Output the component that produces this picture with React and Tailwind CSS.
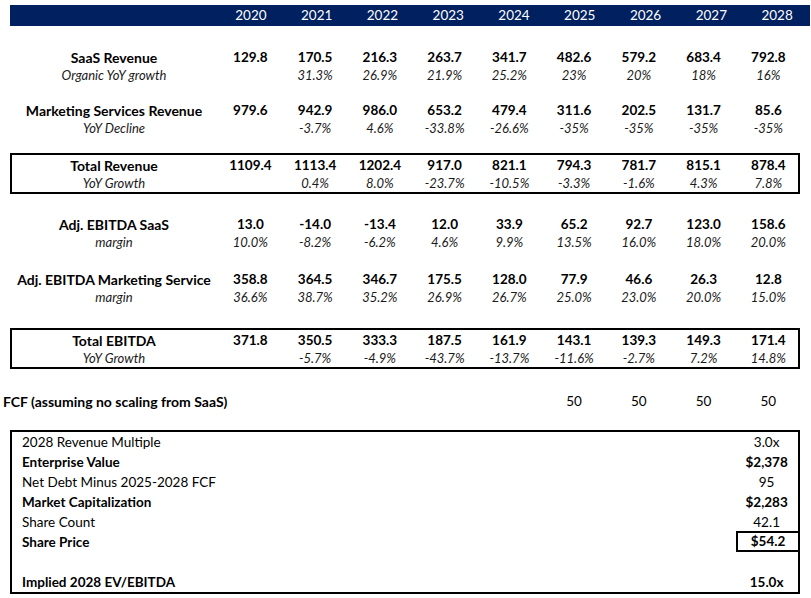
import React from 'react';

const years = ['2020', '2021', '2022', '2023', '2024', '2025', '2026', '2027', '2028'];

const sections = [
  {
    boxed: false,
    gap: 'mt-[21px]',
    main: ['SaaS Revenue', ['129.8', '170.5', '216.3', '263.7', '341.7', '482.6', '579.2', '683.4', '792.8']],
    sub: ['Organic YoY growth', ['', '31.3%', '26.9%', '21.9%', '25.2%', '23%', '20%', '18%', '16%']],
  },
  {
    boxed: false,
    gap: 'mt-[15px]',
    main: ['Marketing Services Revenue', ['979.6', '942.9', '986.0', '653.2', '479.4', '311.6', '202.5', '131.7', '85.6']],
    sub: ['YoY Decline', ['', '-3.7%', '4.6%', '-33.8%', '-26.6%', '-35%', '-35%', '-35%', '-35%']],
  },
  {
    boxed: true,
    gap: 'mt-[15px]',
    main: ['Total Revenue', ['1109.4', '1113.4', '1202.4', '917.0', '821.1', '794.3', '781.7', '815.1', '878.4']],
    sub: ['YoY Growth', ['', '0.4%', '8.0%', '-23.7%', '-10.5%', '-3.3%', '-1.6%', '4.3%', '7.8%']],
  },
  {
    boxed: false,
    gap: 'mt-[20px]',
    main: ['Adj. EBITDA SaaS', ['13.0', '-14.0', '-13.4', '12.0', '33.9', '65.2', '92.7', '123.0', '158.6']],
    sub: ['margin', ['10.0%', '-8.2%', '-6.2%', '4.6%', '9.9%', '13.5%', '16.0%', '18.0%', '20.0%']],
  },
  {
    boxed: false,
    gap: 'mt-[17px]',
    main: ['Adj. EBITDA Marketing Service', ['358.8', '364.5', '346.7', '175.5', '128.0', '77.9', '46.6', '26.3', '12.8']],
    sub: ['margin', ['36.6%', '38.7%', '35.2%', '26.9%', '26.7%', '25.0%', '23.0%', '20.0%', '15.0%']],
  },
  {
    boxed: true,
    gap: 'mt-[21px]',
    main: ['Total EBITDA', ['371.8', '350.5', '333.3', '187.5', '161.9', '143.1', '139.3', '149.3', '171.4']],
    sub: ['YoY Growth', ['', '-5.7%', '-4.9%', '-43.7%', '-13.7%', '-11.6%', '-2.7%', '7.2%', '14.8%']],
  },
];

const valuation = [
  ['2028 Revenue Multiple', '3.0x', false],
  ['Enterprise Value', '$2,378', true],
  ['Net Debt Minus 2025-2028 FCF', '95', false],
  ['Market Capitalization', '$2,283', true],
  ['Share Count', '42.1', false],
  ['Share Price', '$54.2', true],
  ['', '', false],
  ['Implied 2028 EV/EBITDA', '15.0x', true],
];

const Row = ({ label, values, italic }) => (
  <div
    className={`grid grid-cols-[208px_repeat(9,64.75px)] items-center ${
      italic ? 'h-[19px] text-[13px] italic text-[#1a1a1a]' : 'h-[19px] text-[13.5px] font-bold'
    }`}
  >
    <div className={`text-center whitespace-nowrap ${italic ? '' : 'text-[14px]'}`}>{label}</div>
    {values.map((v, i) => (
      <div key={i} className="text-center">
        {v}
      </div>
    ))}
  </div>
);

const App = () => {
  return (
    <div className="w-[811px] h-[598px] bg-white text-black font-['Lato','Noto_Sans',sans-serif] overflow-hidden">
      {/* Year header */}
      <div className="ml-[10px] mt-[5px] w-[800px] h-[21px] bg-[#002060] text-white text-[13.5px] grid grid-cols-[208px_repeat(9,1fr)] items-center">
        <div></div>
        {years.map((y) => (
          <div key={y} className="text-center">
            {y}
          </div>
        ))}
      </div>

      <div className="ml-[10px] w-[790px]">
        {sections.map((s, idx) =>
          s.boxed ? (
            <div key={idx} className={`${s.gap} ring-2 ring-inset ring-black pt-[2px] pb-px`}>
              <Row label={s.main[0]} values={s.main[1]} />
              <Row label={s.sub[0]} values={s.sub[1]} italic />
            </div>
          ) : (
            <div key={idx} className={s.gap}>
              <Row label={s.main[0]} values={s.main[1]} />
              <Row label={s.sub[0]} values={s.sub[1]} italic />
            </div>
          )
        )}

        {/* FCF */}
        <div className="mt-[22px] h-[20px] grid grid-cols-[208px_repeat(9,64.75px)] items-center text-[13.5px]">
          <div className="-ml-[7px] font-bold text-[14px] whitespace-nowrap">FCF (assuming no scaling from SaaS)</div>
          <div></div>
          <div></div>
          <div></div>
          <div></div>
          <div></div>
          <div className="text-center">50</div>
          <div className="text-center">50</div>
          <div className="text-center">50</div>
          <div className="text-center">50</div>
        </div>

        {/* Valuation box */}
        <div className="mt-[19px] ring-2 ring-inset ring-black py-[2px] text-[13.5px]">
          {valuation.map(([label, value, bold], i) => (
            <div key={i} className={`h-[20px] flex items-center ${bold ? 'font-bold' : ''}`}>
              <div className="flex-1 pl-[12px]">{label}</div>
              {label === 'Share Price' ? (
                <div className="w-[64px] h-[21px] -mt-px border-2 border-black flex items-center justify-center">
                  {value}
                </div>
              ) : (
                <div className="w-[64.75px] pr-[2px] text-center">{value}</div>
              )}
            </div>
          ))}
        </div>
      </div>
    </div>
  );
};

export default App;
